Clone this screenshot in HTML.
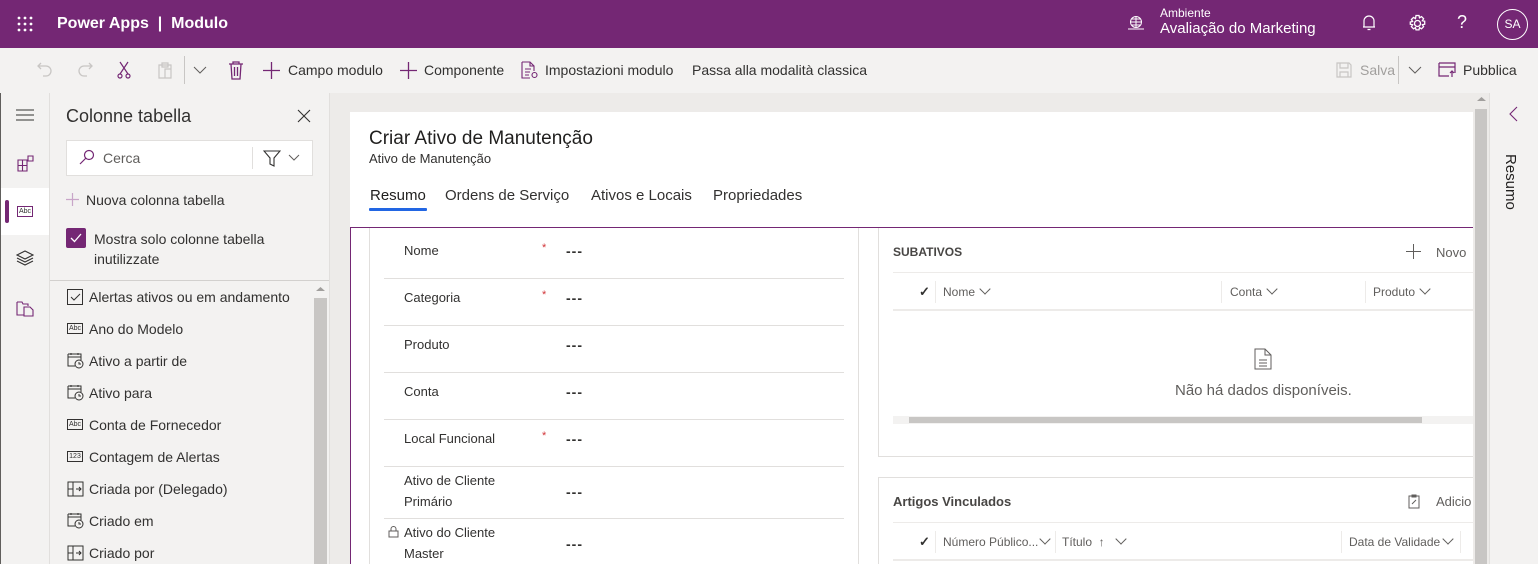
<!DOCTYPE html>
<html><head><meta charset="utf-8"><style>
*{box-sizing:border-box;margin:0;padding:0}
body{width:1538px;height:564px;overflow:hidden;font-family:"Liberation Sans",sans-serif;background:#f3f2f1;position:relative;color:#323130}
.a{position:absolute}
.top{left:0;top:0;width:1538px;height:48px;background:#742774;color:#fff}
.tb{left:0;top:48px;width:1538px;height:45px;background:#f3f2f1;font-size:14px;color:#323130}
.tb span{position:absolute;top:14px;white-space:nowrap}
svg{position:absolute}
.li{position:absolute;left:89px;font-size:14px;color:#323130;white-space:nowrap}
.lic{position:absolute;left:67px}
.fl{position:absolute;left:404px;font-size:13px;color:#323130;line-height:21px}
.fv{position:absolute;left:566px;font-size:14px;color:#323130;font-weight:bold;letter-spacing:1px}
.ast{position:absolute;left:542px;color:#d13438;font-size:11px}
.hr{position:absolute;left:384px;width:460px;height:1px;background:#e1dfdd}
.ch{display:inline-block;width:8px;height:8px;border-right:1px solid #605e5c;border-bottom:1px solid #605e5c;transform:rotate(45deg);margin-left:6px;position:relative;top:-3px}
</style></head><body>
<div class="a top">
 <svg style="left:17px;top:16px" width="16" height="16"><g fill="#fff"><circle cx="2" cy="2" r="1.4"/><circle cx="8" cy="2" r="1.4"/><circle cx="14" cy="2" r="1.4"/><circle cx="2" cy="8" r="1.4"/><circle cx="8" cy="8" r="1.4"/><circle cx="14" cy="8" r="1.4"/><circle cx="2" cy="14" r="1.4"/><circle cx="8" cy="14" r="1.4"/><circle cx="14" cy="14" r="1.4"/></g></svg>
 <div class="a" style="left:57px;top:15px;font-size:16px;font-weight:bold">Power Apps &nbsp;|&nbsp; Modulo</div>
 <svg style="left:1127px;top:15px" width="18" height="16" fill="none" stroke="#fff" stroke-width="1"><circle cx="9" cy="7" r="5.5"/><path d="M3.5 7h11M9 1.5v11M5 4h8M5 10h8M1 14h16"/></svg>
 <div class="a" style="left:1160px;top:6px;font-size:12px">Ambiente</div>
 <div class="a" style="left:1160px;top:20px;font-size:15px">Avaliação do Marketing</div>
 <svg style="left:1361px;top:14px" width="16" height="18" fill="none" stroke="#fff" stroke-width="1.2"><path d="M3 13V7a5 5 0 0 1 10 0v6zM2 13h12M6.5 15.5h3"/></svg>
 <svg style="left:1408px;top:14px" width="19" height="19" fill="none" stroke="#fff" stroke-width="1.3"><circle cx="9.5" cy="9.5" r="3"/><path d="M8 1.5h3l.5 2.3 2-1.2 2.1 2.1-1.2 2 2.3.5v3l-2.3.5 1.2 2-2.1 2.1-2-1.2-.5 2.3H8l-.5-2.3-2 1.2-2.1-2.1 1.2-2-2.3-.5V8l2.3-.5-1.2-2 2.1-2.1 2 1.2z"/></svg>
 <div class="a" style="left:1457px;top:12px;font-size:18px">?</div>
 <div class="a" style="left:1497px;top:9px;width:31px;height:31px;border:1px solid #fff;border-radius:50%;font-size:12px;text-align:center;line-height:29px">SA</div>
</div>
<div class="a tb">
 <svg style="left:36px;top:12px" width="18" height="18" fill="none" stroke="#c8c6c4" stroke-width="1.3"><path d="M5 3L2 6l3 3M2 6h8a5 5 0 0 1 0 10H7"/></svg>
 <svg style="left:76px;top:12px" width="18" height="18" fill="none" stroke="#c8c6c4" stroke-width="1.3"><path d="M13 3l3 3-3 3M16 6H8a5 5 0 0 0 0 10h3"/></svg>
 <svg style="left:116px;top:12px" width="16" height="20" fill="none" stroke="#742774" stroke-width="1.2"><path d="M4 2l8 12M12 2L4 14"/><circle cx="4" cy="16" r="2"/><circle cx="12" cy="16" r="2"/></svg>
 <svg style="left:156px;top:13px" width="18" height="18" fill="none" stroke="#c8c6c4" stroke-width="1.2"><path d="M3 4h12v13H3zM6 2h6v4H6zM9 8h6v9H9z"/></svg>
 <div class="a" style="left:184px;top:8px;width:1px;height:28px;background:#c8c6c4"></div>
 <svg style="left:193px;top:17px" width="14" height="10" fill="none" stroke="#605e5c" stroke-width="1"><path d="M1 2l6 6 6-6"/></svg>
 <svg style="left:228px;top:13px" width="16" height="19" fill="none" stroke="#742774" stroke-width="1.3"><path d="M1 3h14M5 3V1h6v2M3 3l1 15h8l1-15M6.5 6v9M9.5 6v9"/></svg>
 <svg style="left:263px;top:14px" width="17" height="17" stroke="#742774" stroke-width="1.3"><path d="M8.5 0v17M0 8.5h17"/></svg>
 <span style="left:288px">Campo modulo</span>
 <svg style="left:400px;top:14px" width="17" height="17" stroke="#742774" stroke-width="1.3"><path d="M8.5 0v17M0 8.5h17"/></svg>
 <span style="left:424px">Componente</span>
 <svg style="left:521px;top:13px" width="18" height="19" fill="none" stroke="#742774" stroke-width="1.1"><path d="M1 1h8l4 4v5M9 1v4h4M1 1v16h8M4 8h6M4 11h5M4 14h4"/><circle cx="13.5" cy="14" r="2.5"/></svg>
 <span style="left:545px">Impostazioni modulo</span>
 <span style="left:692px">Passa alla modalità classica</span>
 <svg style="left:1336px;top:14px" width="16" height="16" fill="none" stroke="#c8c6c4" stroke-width="1.2"><path d="M1 1h12l2 2v12H1zM4 1v5h8V1M4 15v-5h8v5"/></svg>
 <span style="left:1360px;color:#a19f9d">Salva</span>
 <div class="a" style="left:1398px;top:8px;width:1px;height:28px;background:#c8c6c4"></div>
 <svg style="left:1408px;top:17px" width="14" height="10" fill="none" stroke="#605e5c" stroke-width="1"><path d="M1 2l6 6 6-6"/></svg>
 <svg style="left:1438px;top:14px" width="18" height="16" fill="none" stroke="#742774" stroke-width="1.2"><path d="M1 1h16v10M1 1v13h10M1 5h16M14 15V9M12 11l2-2 2 2"/></svg>
 <span style="left:1463px">Pubblica</span>
</div>
<!-- left rail -->
<div class="a" style="left:0;top:93px;width:49px;height:471px;background:#f3f2f1;border-left:1px solid #605e5c"></div>
<div class="a" style="left:1px;top:188px;width:48px;height:47px;background:#fff"></div>
<div class="a" style="left:5px;top:200px;width:4px;height:23px;background:#742774;border-radius:2px"></div>
<svg style="left:16px;top:109px" width="18" height="12" stroke="#323130" stroke-width="1"><path d="M0 1h18M0 6h18M0 11h18"/></svg>
<svg style="left:17px;top:155px" width="17" height="17" fill="none" stroke="#742774" stroke-width="1.1"><path d="M1 5h9v11H1zM1 10.5h9M5.5 5v11M11 1h5v5h-5z"/></svg>
<div class="a" style="left:17px;top:206px;width:16px;height:11px;border:1px solid #742774;font-size:7px;line-height:9px;text-align:center;color:#323130">Abc</div>
<svg style="left:16px;top:250px" width="18" height="16" fill="none" stroke="#323130" stroke-width="1.1"><path d="M9 1l8 4-8 4-8-4zM1 8l8 4 8-4M1 11l8 4 8-4"/></svg>
<svg style="left:16px;top:299px" width="18" height="18" fill="none" stroke="#742774" stroke-width="1.1"><path d="M1 3h5l1 2h5v2M1 3v13h7M8 8h6l3 3v6H8z"/></svg>
<!-- panel -->
<div class="a" style="left:49px;top:93px;width:281px;height:471px;background:#f3f2f1;border-left:1px solid #e1dfdd;border-right:1px solid #e1dfdd"></div>
<div class="a" style="left:66px;top:106px;font-size:18px;color:#323130">Colonne tabella</div>
<svg style="left:297px;top:109px" width="14" height="14" stroke="#323130" stroke-width="1.1"><path d="M1 1l12 12M13 1L1 13"/></svg>
<div class="a" style="left:66px;top:140px;width:247px;height:36px;background:#fff;border:1px solid #e1dfdd"></div>
<svg style="left:79px;top:149px" width="16" height="16" fill="none" stroke="#742774" stroke-width="1.2"><circle cx="10" cy="6" r="4.5"/><path d="M7 9l-6 6"/></svg>
<div class="a" style="left:103px;top:150px;font-size:14px;color:#605e5c">Cerca</div>
<div class="a" style="left:252px;top:147px;width:1px;height:22px;background:#e1dfdd"></div>
<svg style="left:263px;top:150px" width="18" height="17" fill="none" stroke="#323130" stroke-width="1.1"><path d="M1 1h16l-6 7v8l-4-2V8z"/></svg>
<svg style="left:288px;top:154px" width="12" height="8" fill="none" stroke="#605e5c" stroke-width="1"><path d="M1 1l5 5 5-5"/></svg>
<svg style="left:66px;top:193px" width="13" height="13" stroke="#c8a5c8" stroke-width="1.2"><path d="M6.5 0v13M0 6.5h13"/></svg>
<div class="a" style="left:86px;top:192px;font-size:14px">Nuova colonna tabella</div>
<div class="a" style="left:66px;top:228px;width:20px;height:20px;background:#742774;border-radius:2px"></div>
<svg style="left:70px;top:233px" width="12" height="10" fill="none" stroke="#fff" stroke-width="1.3"><path d="M1 5l3.5 3.5L11 1"/></svg>
<div class="a" style="left:94px;top:229px;font-size:14px;line-height:20px">Mostra solo colonne tabella<br>inutilizzate</div>
<div class="a" style="left:50px;top:280px;width:279px;height:1px;background:#d2d0ce"></div>
<svg style="left:316px;top:286px" width="9" height="6"><path d="M0 5l4.5-4 4.5 4z" fill="#a19f9d"/></svg>
<div class="a" style="left:314px;top:298px;width:13px;height:266px;background:#c8c6c4"></div>
<div class="lic" style="top:289px;width:16px;height:16px;border:1px solid #323130"></div>
<svg style="left:70px;top:293px" width="11" height="9" fill="none" stroke="#323130" stroke-width="1"><path d="M1 4l3 3 6-6"/></svg>
<div class="li" style="top:289px">Alertas ativos ou em andamento</div>
<div class="lic" style="top:323px;width:16px;height:11px;border:1px solid #323130;font-size:7px;line-height:9px;text-align:center">Abc</div>
<div class="li" style="top:321px">Ano do Modelo</div>
<svg style="left:67px;top:352px" width="17" height="17" fill="none" stroke="#323130" stroke-width="1"><path d="M1 2h13v6M1 2v12h7M1 5h13M4 1v2M11 1v2"/><circle cx="12" cy="12" r="4"/><path d="M12 10v2h2"/></svg>
<div class="li" style="top:353px">Ativo a partir de</div>
<svg style="left:67px;top:384px" width="17" height="17" fill="none" stroke="#323130" stroke-width="1"><path d="M1 2h13v6M1 2v12h7M1 5h13M4 1v2M11 1v2"/><circle cx="12" cy="12" r="4"/><path d="M12 10v2h2"/></svg>
<div class="li" style="top:385px">Ativo para</div>
<div class="lic" style="top:419px;width:16px;height:11px;border:1px solid #323130;font-size:7px;line-height:9px;text-align:center">Abc</div>
<div class="li" style="top:417px">Conta de Fornecedor</div>
<div class="lic" style="top:451px;width:16px;height:11px;border:1px solid #323130;font-size:7px;line-height:9px;text-align:center">123</div>
<div class="li" style="top:449px">Contagem de Alertas</div>
<svg style="left:67px;top:481px" width="17" height="16" fill="none" stroke="#323130" stroke-width="1"><path d="M1 1h15v14H1zM6 1v14M1 8h5M9 8h5M12 6l2 2-2 2"/></svg>
<div class="li" style="top:481px">Criada por (Delegado)</div>
<svg style="left:67px;top:512px" width="17" height="17" fill="none" stroke="#323130" stroke-width="1"><path d="M1 2h13v6M1 2v12h7M1 5h13M4 1v2M11 1v2"/><circle cx="12" cy="12" r="4"/><path d="M12 10v2h2"/></svg>
<div class="li" style="top:513px">Criado em</div>
<svg style="left:67px;top:545px" width="17" height="16" fill="none" stroke="#323130" stroke-width="1"><path d="M1 1h15v14H1zM6 1v14M1 8h5M9 8h5M12 6l2 2-2 2"/></svg>
<div class="li" style="top:545px">Criado por</div>
<!-- canvas -->
<div class="a" style="left:330px;top:93px;width:1160px;height:471px;background:#edebe9"></div>
<div class="a" style="left:350px;top:112px;width:1123px;height:452px;background:#fff"></div>
<div class="a" style="left:369px;top:128px;font-size:19px;color:#201f1e">Criar Ativo de Manutenção</div>
<div class="a" style="left:369px;top:151px;font-size:13px;color:#323130">Ativo de Manutenção</div>
<div class="a" style="left:370px;top:187px;font-size:15px;color:#201f1e">Resumo</div>
<div class="a" style="left:369px;top:208px;width:58px;height:3px;background:#2266e3;border-radius:1px"></div>
<div class="a" style="left:445px;top:187px;font-size:15px">Ordens de Serviço</div>
<div class="a" style="left:591px;top:187px;font-size:15px">Ativos e Locais</div>
<div class="a" style="left:713px;top:187px;font-size:15px">Propriedades</div>
<div class="a" style="left:350px;top:227px;width:1123px;height:337px;border:1px solid #742774;border-right:none;border-bottom:none"></div>
<div class="a" style="left:369px;top:228px;width:490px;height:336px;border-left:1px solid #e1dfdd;border-right:1px solid #e1dfdd"></div>
<div class="fl" style="top:240px">Nome</div><div class="ast" style="top:242px">*</div><div class="fv" style="top:243px">---</div>
<div class="hr" style="top:278px"></div>
<div class="fl" style="top:287px">Categoria</div><div class="ast" style="top:289px">*</div><div class="fv" style="top:290px">---</div>
<div class="hr" style="top:325px"></div>
<div class="fl" style="top:334px">Produto</div><div class="fv" style="top:337px">---</div>
<div class="hr" style="top:372px"></div>
<div class="fl" style="top:381px">Conta</div><div class="fv" style="top:384px">---</div>
<div class="hr" style="top:419px"></div>
<div class="fl" style="top:428px">Local Funcional</div><div class="ast" style="top:430px">*</div><div class="fv" style="top:431px">---</div>
<div class="hr" style="top:466px"></div>
<div class="fl" style="top:470px">Ativo de Cliente<br>Primário</div><div class="fv" style="top:484px">---</div>
<div class="hr" style="top:518px"></div>
<svg style="left:388px;top:525px" width="11" height="13" fill="none" stroke="#605e5c" stroke-width="1"><path d="M1 6h9v6H1zM3 6V4a2.5 2.5 0 0 1 5 0v2"/></svg>
<div class="fl" style="top:522px">Ativo do Cliente<br>Master</div><div class="fv" style="top:536px">---</div>
<!-- subgrid 1 -->
<div class="a" style="left:878px;top:228px;width:600px;height:229px;border-left:1px solid #e1dfdd;border-bottom:1px solid #e1dfdd"></div>
<div class="a" style="left:893px;top:245px;font-size:12px;font-weight:bold;color:#484644">SUBATIVOS</div>
<svg style="left:1406px;top:244px" width="15" height="15" stroke="#605e5c" stroke-width="1"><path d="M7.5 0v15M0 7.5h15"/></svg>
<div class="a" style="left:1436px;top:245px;font-size:13px;color:#605e5c">Novo</div>
<div class="a" style="left:893px;top:272px;width:580px;height:1px;background:#edebe9"></div>
<div class="a" style="left:919px;top:284px;font-size:13px;font-weight:bold">✓</div>
<div class="a" style="left:935px;top:281px;width:1px;height:22px;background:#edebe9"></div>
<div class="a" style="left:943px;top:285px;font-size:12px;color:#605e5c">Nome<i class="ch"></i></div>
<div class="a" style="left:1221px;top:281px;width:1px;height:22px;background:#edebe9"></div>
<div class="a" style="left:1230px;top:285px;font-size:12px;color:#605e5c">Conta<i class="ch"></i></div>
<div class="a" style="left:1365px;top:281px;width:1px;height:22px;background:#edebe9"></div>
<div class="a" style="left:1373px;top:285px;font-size:12px;color:#605e5c">Produto<i class="ch"></i></div>
<div class="a" style="left:893px;top:309px;width:580px;height:2px;background:#edebe9"></div>
<svg style="left:1254px;top:348px" width="18" height="22" fill="none" stroke="#605e5c" stroke-width="1"><path d="M1 1h10l6 6v14H1zM11 1v6h6M5 12h8M5 15h8M5 18h8"/></svg>
<div class="a" style="left:1175px;top:382px;font-size:15px;color:#605e5c">Não há dados disponíveis.</div>
<div class="a" style="left:893px;top:416px;width:580px;height:8px;background:#f3f2f1"></div>
<div class="a" style="left:909px;top:417px;width:513px;height:6px;background:#c8c6c4"></div>
<!-- subgrid 2 -->
<div class="a" style="left:878px;top:477px;width:600px;height:87px;border-left:1px solid #e1dfdd;border-top:1px solid #e1dfdd"></div>
<div class="a" style="left:893px;top:494px;font-size:13px;font-weight:bold;color:#484644">Artigos Vinculados</div>
<svg style="left:1408px;top:494px" width="12" height="15" fill="none" stroke="#605e5c" stroke-width="1"><path d="M1 2h10v12H1zM4 1h4v2H4zM4 10l4-4"/></svg>
<div class="a" style="left:1436px;top:494px;font-size:13px;color:#605e5c">Adicio</div>
<div class="a" style="left:893px;top:522px;width:580px;height:1px;background:#edebe9"></div>
<div class="a" style="left:919px;top:534px;font-size:13px;font-weight:bold">✓</div>
<div class="a" style="left:935px;top:531px;width:1px;height:22px;background:#edebe9"></div>
<div class="a" style="left:943px;top:535px;font-size:12px;color:#605e5c">Número Público...<i class="ch" style="margin-left:3px"></i></div>
<div class="a" style="left:1055px;top:531px;width:1px;height:22px;background:#edebe9"></div>
<div class="a" style="left:1062px;top:535px;font-size:12px;color:#605e5c">Título &nbsp;↑ &nbsp;<i class="ch"></i></div>
<div class="a" style="left:1341px;top:531px;width:1px;height:22px;background:#edebe9"></div>
<div class="a" style="left:1349px;top:535px;font-size:12px;color:#605e5c">Data de Validade<i class="ch" style="margin-left:4px"></i></div>
<div class="a" style="left:1460px;top:531px;width:1px;height:22px;background:#edebe9"></div>
<div class="a" style="left:893px;top:559px;width:580px;height:2px;background:#edebe9"></div>
<!-- scrollbar -->
<div class="a" style="left:1473px;top:93px;width:16px;height:471px;background:#edebe9"></div>
<svg style="left:1477px;top:96px" width="9" height="6"><path d="M0 5l4.5-4 4.5 4z" fill="#a19f9d"/></svg>
<div class="a" style="left:1475px;top:109px;width:12px;height:455px;background:#c8c6c4"></div>
<!-- right panel -->
<div class="a" style="left:1489px;top:93px;width:49px;height:471px;background:#f3f2f1;border-left:1px solid #e1dfdd"></div>
<svg style="left:1509px;top:106px" width="9" height="16" fill="none" stroke="#742774" stroke-width="1.1"><path d="M8 1L1 8l7 7"/></svg>
<div class="a" style="left:1502px;top:154px;writing-mode:vertical-rl;font-size:15px;color:#201f1e">Resumo</div>
</body></html>
